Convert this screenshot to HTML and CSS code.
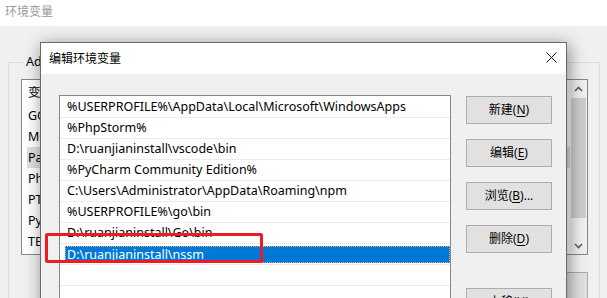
FILE: index.html
```html
<!DOCTYPE html>
<html lang="zh-CN">
<head>
<meta charset="utf-8">
<title>编辑环境变量</title>
<link rel="stylesheet" href="styles.css">
</head>
<body>
<div class="screen">
  <div class="bgwin">
    <div class="bg-title">环境变量</div>
    <div class="bg-body">
      <fieldset class="group">
        <legend>Administrator 的用户变量(U)</legend>
        <div class="bg-list">
          <div class="bg-rows">
            <div class="bg-head">变量</div>
            <div class="bg-row">GOPATH</div>
            <div class="bg-row">MOZ_PLUGIN_PATH</div>
            <div class="bg-row bg-sel">Path</div>
            <div class="bg-row">PhpStorm</div>
            <div class="bg-row">PTH</div>
            <div class="bg-row">PyCharm</div>
            <div class="bg-row">TEMP</div>
          </div>
          <div class="vscroll">
            <div class="sb-arrow">
              <svg width="9" height="6" viewBox="0 0 9 6"><path d="M1 5 L4.5 1.5 L8 5" fill="none" stroke="#606060" stroke-width="1.6"/></svg>
            </div>
            <div class="sb-track"><div class="sb-thumb"></div></div>
            <div class="sb-arrow">
              <svg width="9" height="6" viewBox="0 0 9 6"><path d="M1 1 L4.5 4.5 L8 1" fill="none" stroke="#606060" stroke-width="1.6"/></svg>
            </div>
          </div>
        </div>
        <div class="bg-buttons">
          <div class="btn">新建(<u>N</u>)...</div>
          <div class="btn">编辑(<u>E</u>)...</div>
          <div class="btn">删除(<u>D</u>)</div>
        </div>
      </fieldset>
    </div>
  </div>

  <div class="dialog">
    <div class="dlg-title">
      <span>编辑环境变量</span>
      <svg class="close" width="11" height="11" viewBox="0 0 11 11"><path d="M0.5 0.5 L10.5 10.5 M10.5 0.5 L0.5 10.5" stroke="#111" stroke-width="1"/></svg>
    </div>
    <div class="dlg-body">
      <div class="list">
        <div class="row">%USERPROFILE%\AppData\Local\Microsoft\WindowsApps</div>
        <div class="row">%PhpStorm%</div>
        <div class="row">D:\ruanjianinstall\vscode\bin</div>
        <div class="row">%PyCharm Community Edition%</div>
        <div class="row">C:\Users\Administrator\AppData\Roaming\npm</div>
        <div class="row">%USERPROFILE%\go\bin</div>
        <div class="row">D:\ruanjianinstall\Go\bin</div>
        <div class="row row-sel"><span class="sel">D:\ruanjianinstall\nssm</span></div>
        <div class="row"></div>
        <div class="row"></div>
      </div>
      <div class="buttons">
        <div class="btn">新建(<u>N</u>)</div>
        <div class="btn">编辑(<u>E</u>)</div>
        <div class="btn">浏览(<u>B</u>)...</div>
        <div class="btn">删除(<u>D</u>)</div>
        <div class="btn btn-gap">上移(<u>U</u>)</div>
      </div>
    </div>
  </div>

  <div class="annot"></div>
</div>
</body>
</html>
```

FILE: styles.css
```css
* { box-sizing: border-box; }
html, body { margin: 0; padding: 0; }
body {
  width: 607px;
  height: 298px;
  overflow: hidden;
  font-family: "Noto Sans", "Noto Sans CJK SC", sans-serif;
  font-size: 12px;
  color: #000;
  background: #f0f0f0;
}
.screen {
  position: relative;
  width: 607px;
  height: 298px;
  overflow: hidden;
}

/* background window */
.bg-title {
  height: 26px;
  background: #fff;
  color: #9a9a9a;
  padding-left: 5px;
  line-height: 24px;
}
.bg-body {
  background: #f0f0f0;
  padding: 27px 8px 0 8px;
  height: 272px;
}
.group {
  margin: 0;
  width: 592px;
  padding: 0 11px 0 12px;
  border: 1px solid #dcdcdc;
  min-width: 0;
}
.group legend {
  padding: 0 2px;
  margin-left: 3px;
  line-height: 18px;
  font-size: 12.5px;
}
.bg-list {
  margin-top: 8px;
  height: 176px;
  border: 1px solid #828790;
  background: #fff;
  display: flex;
  font-size: 12.5px;
}
.bg-rows {
  flex: 1;
  padding-left: 5px;
  overflow: hidden;
}
.bg-head {
  height: 25px;
  padding: 5px 0 0 1px;
  line-height: 16px;
}
.bg-row {
  height: 21px;
  line-height: 21px;
  padding-left: 1px;
}
.bg-sel { background: #e0e0e0; }
.vscroll {
  width: 17px;
  background: #f0f0f0;
  display: flex;
  flex-direction: column;
}
.sb-arrow {
  height: 17px;
  display: flex;
  align-items: center;
  justify-content: center;
}
.sb-track {
  flex: 1;
  padding: 1px 1px 19px 1px;
}
.sb-thumb {
  height: 100%;
  background: #cdcdcd;
}
.bg-buttons {
  display: flex;
  justify-content: flex-end;
  gap: 8px;
  margin-top: 17px;
}
.btn {
  width: 86px;
  height: 28px;
  background: #e1e1e1;
  border: 1px solid #adadad;
  display: flex;
  align-items: center;
  justify-content: center;
  line-height: 16px;
}
.btn u { text-decoration-thickness: 1px; text-underline-offset: 2px; }

/* dialog (window on desktop) */
.dialog {
  position: absolute;
  left: 40px;
  top: 42px;
  width: 527px;
  height: 300px;
  border: 1px solid #6a6a6a;
  background: #f0f0f0;
  box-shadow: 2px 3px 16px rgba(0, 0, 0, 0.45);
}
.dlg-title {
  height: 31px;
  background: #fff;
  display: flex;
  align-items: center;
  justify-content: space-between;
  padding: 0 9px 2px 8px;
}
.close { display: block; }
.dlg-body {
  display: flex;
  padding: 21px 0 0 18px;
}
.list {
  width: 392px;
  height: 260px;
  border: 1px solid #828790;
  border-bottom: none;
  background: #fff;
  padding-top: 1px;
  display: flex;
  flex-direction: column;
  font-size: 12.5px;
}
.row {
  flex: 0 0 21px;
  height: 21px;
  border-bottom: 1px solid #ececec;
  padding-left: 7px;
  line-height: 20px;
  white-space: nowrap;
}
.row-sel {
  padding: 2px 0 1px 5px;
  line-height: 15px;
}
.sel {
  display: block;
  height: 17px;
  background: #0078d7;
  color: #fff;
  padding-left: 1px;
  border: 1px dotted #e6b070;
}
.buttons {
  margin-left: 15px;
  padding-top: 1px;
  display: flex;
  flex-direction: column;
  gap: 15px;
}
.btn-gap { margin-top: 20px; }

/* annotation */
.annot {
  position: absolute;
  left: 45px;
  top: 233px;
  width: 218px;
  height: 30px;
  border: 3px solid #ec1c24;
  border-radius: 2px;
}
```
